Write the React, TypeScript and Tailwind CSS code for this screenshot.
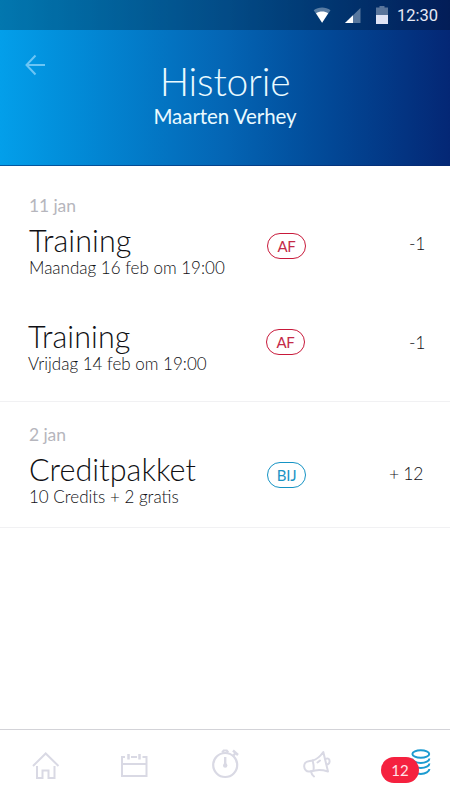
import React from "react";
import clsx from "clsx";

interface Entry {
    title: string;
    detail: string;
    kind: "AF" | "BIJ";
    amount: string;
    textClass: string;
    badgeClass: string;
    amountClass: string;
}

interface DayGroup {
    date: string;
    className: string;
    entries: Entry[];
}

const history: DayGroup[] = [
    {
        date: "11 jan",
        className: "h-[236px] pt-[29px]",
        entries: [
            { title: "Training", detail: "Maandag 16 feb om 19:00", kind: "AF", amount: "-1", textClass: "pl-[29px]", badgeClass: "mt-[12px]", amountClass: "mt-[13px] pr-[25px]" },
            { title: "Training", detail: "Vrijdag 14 feb om 19:00", kind: "AF", amount: "-1", textClass: "pl-[28px]", badgeClass: "mt-[12px] -ml-px", amountClass: "mt-[16px] pr-[25px]" },
        ],
    },
    {
        date: "2 jan",
        className: "h-[126px] pt-[22px]",
        entries: [
            { title: "Creditpakket", detail: "10 Credits + 2 gratis", kind: "BIJ", amount: "+ 12", textClass: "pl-[29px]", badgeClass: "mt-[12px]", amountClass: "mt-[14px] pr-[27px]" },
        ],
    },
];

function StatusBar() {
    return (
        <div className="h-[30px] bg-black/25 flex flex-row items-start">
            <svg className="ml-[313px] mt-[7px]" width="18" height="16" viewBox="0 0 18 16">
                <path d="M0.7 3.2C5.5 -0.4 12.7 -0.4 17.5 3.2L9.1 15.8z" fill="#fff" fillOpacity="0.35" />
                <path d="M3 6.2C6.5 4 11.7 4 15.2 6.2L9.1 15.8z" fill="#fff" />
            </svg>
            <svg className="ml-[14px] mt-[8px]" width="16" height="15" viewBox="0 0 16 15">
                <path d="M15.5 0V15H0z" fill="#fff" fillOpacity="0.35" />
                <path d="M8 7.2V15H0z" fill="#fff" />
            </svg>
            <svg className="ml-[15px] mt-[6px]" width="12" height="18" viewBox="0 0 12 18">
                <path d="M0 1.5H3.5V0H8.500V1.5H12V9H0z" fill="#fff" fillOpacity="0.35" />
                <path d="M0 9H12V18H0z" fill="#dfe3f5" />
            </svg>
            <span className="ml-[9px] mt-[6px] text-[16.5px] leading-[20px] whitespace-nowrap text-[#e6eaf5] font-['Roboto',sans-serif]">12:30</span>
        </div>
    );
}

function Header() {
    return (
        <header className="h-[166px] border-b border-[#07296f]/60 bg-linear-to-r from-[#039fea] via-[#0465b4] to-[#042775]">
            <StatusBar />
            <div className="flex flex-row items-start">
                <button type="button" className="w-[80px] pl-[25px] pt-[24px]">
                    <svg width="21" height="22" viewBox="0 0 21 22" fill="none" stroke="#6cc5f5" strokeWidth="2">
                        <path d="M20 11H1.5M10.5 1.5L1.5 11L10.5 20.5" />
                    </svg>
                </button>
                <div className="w-[290px] pt-[28px] flex flex-col items-center text-[#eafaff]">
                    <h1 className="text-[39px] leading-[46px] font-light tracking-[-0.2px]">Historie</h1>
                    <p className="text-[20.5px] leading-[24px] tracking-[-0.05px]">Maarten Verhey</p>
                </div>
            </div>
        </header>
    );
}

function HistoryRow({ entry }: { entry: Entry }) {
    return (
        <div className="h-[64px] flex flex-row items-start text-[#101014] font-light">
            <div className={clsx("w-[267px]", entry.textClass)}>
                <p className="text-[30.5px] leading-[38px] tracking-[0.06px]">{entry.title}</p>
                <p className="-mt-px text-[17px] leading-[20px] whitespace-nowrap">{entry.detail}</p>
            </div>
            <span
                className={clsx(
                    "w-[39px] h-[26px] rounded-full border-[1.5px] flex items-center justify-center text-[15px] leading-none font-normal tracking-[-0.2px]",
                    entry.kind === "AF" ? "border-[#c8193a] text-[#c42a48]" : "border-[#1593c4] text-[#1b93c4]",
                    entry.badgeClass,
                )}
            >
                {entry.kind}
            </span>
            <span className={clsx("ml-auto text-[17.5px] leading-[20px] tracking-[-0.3px]", entry.amountClass)}>{entry.amount}</span>
        </div>
    );
}

function BottomNav() {
    return (
        <nav className="h-[71px] border-t border-[#d3d3d8] flex flex-row items-start text-[#d9d9e4]">
            <svg className="ml-[32px] mt-[22px]" width="28" height="28" viewBox="0 0 28 28" fill="none" stroke="currentColor" strokeWidth="2">
                <path d="M1 14L13.7 1.5L26.5 14" />
                <path d="M5 14V26H10.5V18.5H16.5V26H22.5V14" />
            </svg>
            <svg className="ml-[60px] mt-[23px]" width="28" height="26" viewBox="0 0 28 26" fill="none" stroke="currentColor" strokeWidth="2">
                <path d="M5 4H2V23H26.5V4H22.5M11 4H17M2 11H26.5" />
                <path d="M8.500 1V6.500M19.500 1V6.500" strokeWidth="2.5" />
            </svg>
            <svg className="ml-[63px] mt-[19px]" width="30" height="30" viewBox="0 0 30 30" fill="none" stroke="currentColor" strokeWidth="2.2">
                <circle cx="14.2" cy="16" r="12" />
                <path d="M14.200 8V16" strokeWidth="2.4" />
                <circle cx="14.200" cy="16.500" r="2.200" fill="currentColor" stroke="none" />
                <path d="M11.200 3.500L12.700 1.500H15.700L17.200 3.500" />
                <path d="M22 1.500L27 6" strokeWidth="2.4" />
                <path d="M22.500 6.500L24.500 4" />
            </svg>
            <svg className="ml-[62px] mt-[20px]" width="30" height="30" viewBox="0 0 30 30" fill="none" stroke="currentColor" strokeWidth="2" strokeLinejoin="round" strokeLinecap="round">
                <path d="M9.5 10.5C14 9.5 17.5 6 20.3 2L25 21.5C20 20 16.5 19.5 12 20.5L6.5 21.5C3.5 22 1.3 19.5 1.2 16.5C1 13.5 3 11.5 5.5 11.2z" />
                <path d="M9.5 10.5C10.5 13.5 11 17 10.5 20.5M8 21.5C8.5 24 9.5 25.5 11 26.5" />
                <path d="M14.5 12.5L17 10.5M22.5 9C25 7.5 26.7 9 26.6 11.5C26.5 13.5 25 14.5 23.8 14.3" />
            </svg>
            <div className="ml-[48px] mt-[19px] grid w-[50px]">
                <svg className="col-start-1 row-start-1 ml-[30px]" width="20" height="30" viewBox="0 0 20 30" fill="none" stroke="#1c9bd0" strokeWidth="2">
                    <ellipse cx="9.8" cy="5" rx="8.4" ry="3.8" />
                    <path d="M18.4 9.5C18.4 12 14.5 14 9.8 14C5 14 1.2 12 1.2 9.5" />
                    <path d="M18.4 14.5C18.4 17 14.5 19 9.8 19C5 19 1.2 17 1.2 14.5" />
                    <path d="M18.4 20C18.4 22.5 14.5 25 9.8 25C5 25 1.2 22.5 1.2 20" />
                </svg>
                <span className="col-start-1 row-start-1 z-10 mt-[8px] w-[38px] h-[26px] rounded-full bg-[#f5213f] text-[#ffe3e8] text-[15px] leading-[26px] text-center">12</span>
            </div>
        </nav>
    );
}

export default function App() {
    return (
        <div className="w-[450px] h-[800px] flex flex-col bg-white overflow-hidden font-['Lato',sans-serif]">
            <Header />
            <main className="flex-1">
                {history.map((group) => (
                    <section key={group.date} className={clsx("border-b border-[#f1f1f3]", group.className)}>
                        <p className="pl-[29px] text-[17.5px] leading-[22px] text-[#b6b6bd] font-normal tracking-[-0.1px]">{group.date}</p>
                        <div className="mt-[4px] flex flex-col gap-[32px]">
                            {group.entries.map((entry) => (
                                <HistoryRow key={entry.detail} entry={entry} />
                            ))}
                        </div>
                    </section>
                ))}
            </main>
            <BottomNav />
        </div>
    );
}
